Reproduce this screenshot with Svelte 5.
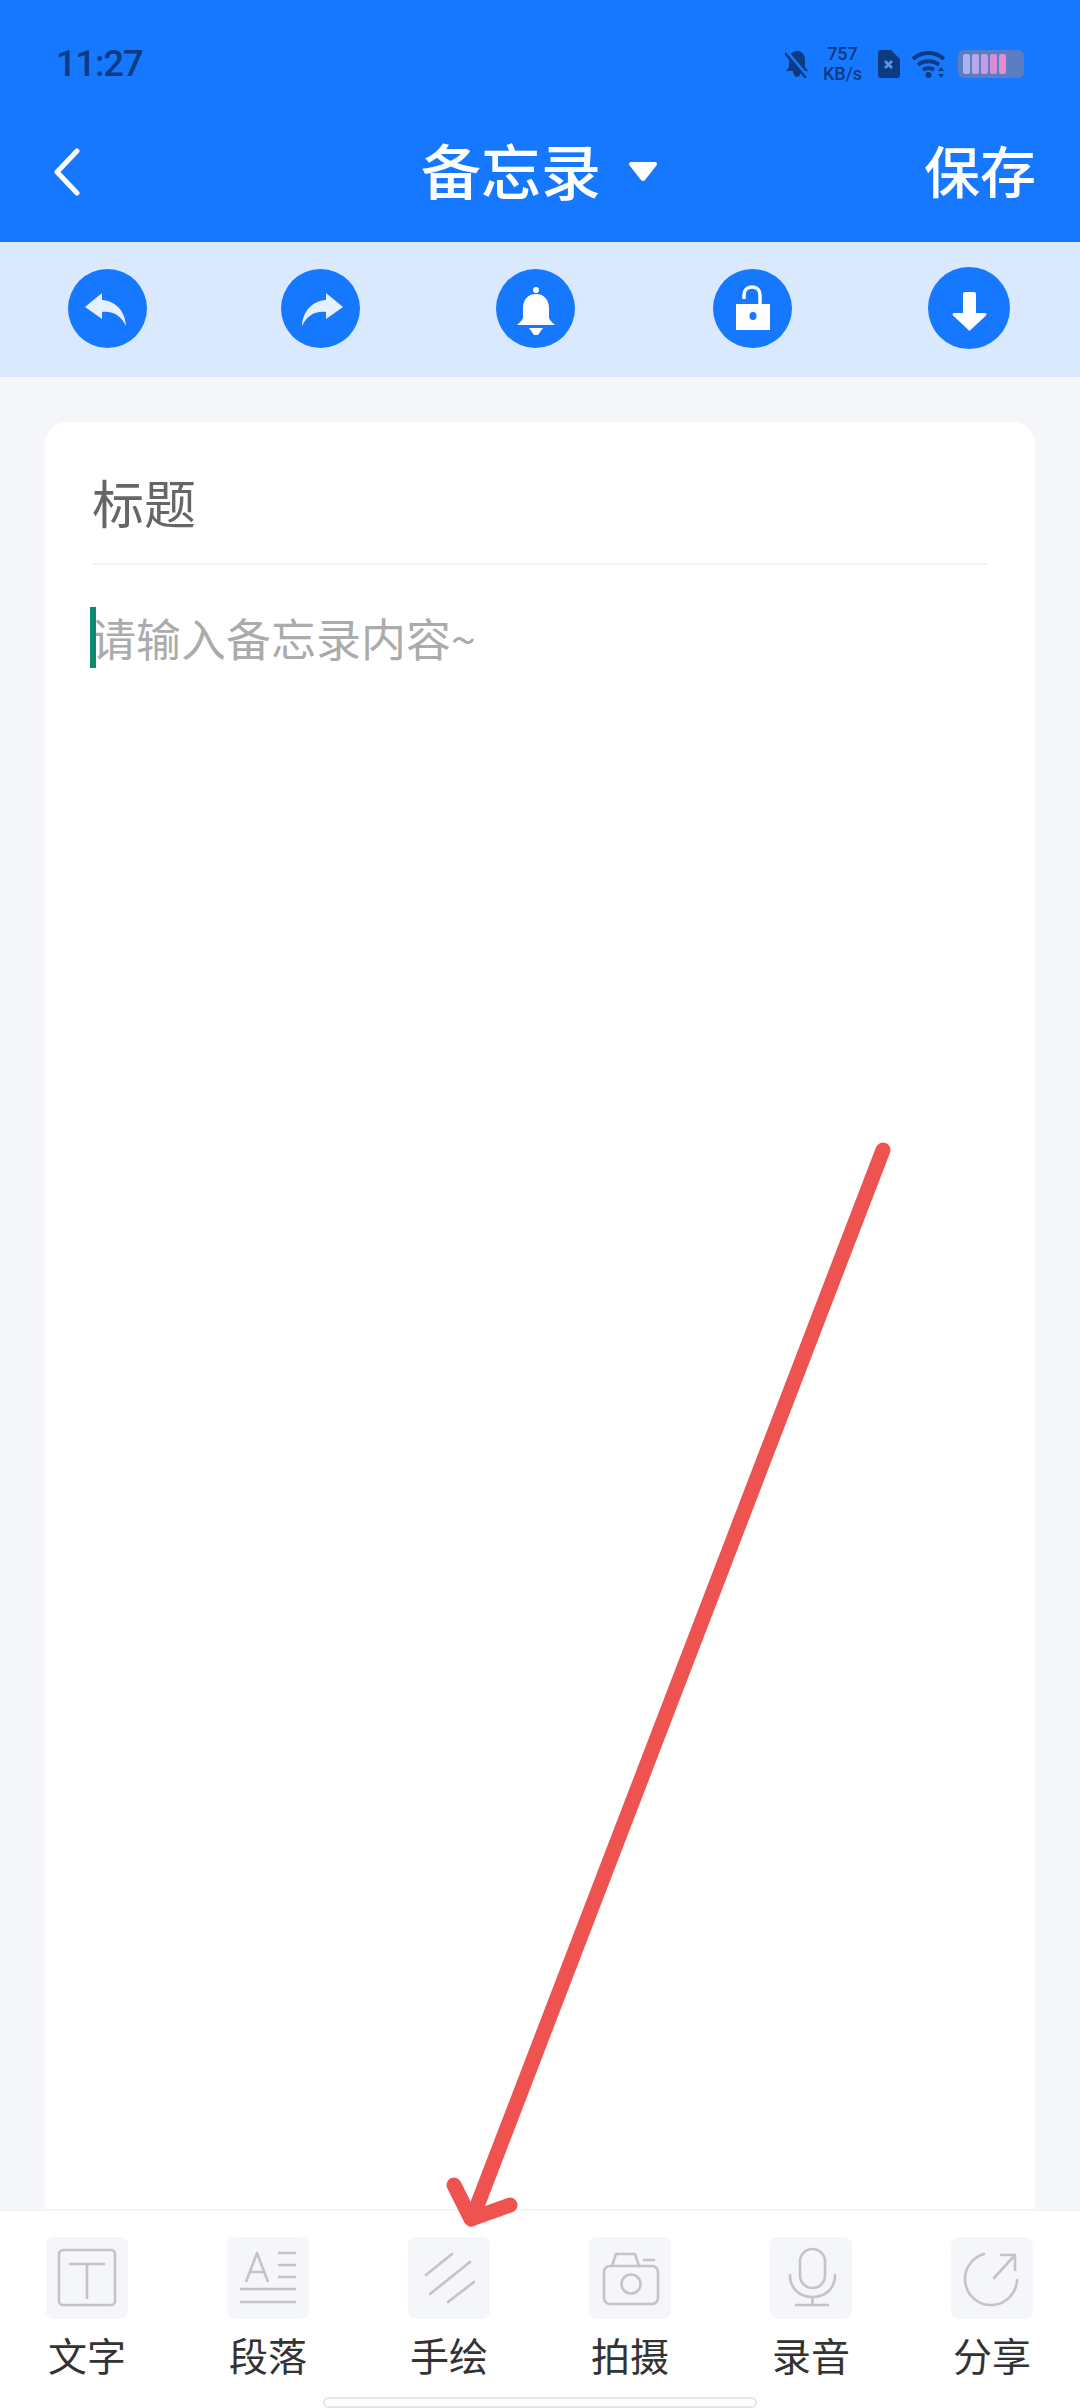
<script>
	const tools = [
		{ label: '文字', id: 'text' },
		{ label: '段落', id: 'para' },
		{ label: '手绘', id: 'draw' },
		{ label: '拍摄', id: 'camera' },
		{ label: '录音', id: 'mic' },
		{ label: '分享', id: 'share' }
	];
</script>

<div class="page">
	<header class="top">
		<div class="status">
			<span class="time">11:27</span>
			<div class="status-icons">
				<svg class="bell-off" width="24" height="28" viewBox="0 0 24 28">
					<path d="M12 1c-5 0-8 4-8 9v7l-3 4h7c0 3 2 6 4 6s4-3 4-6h7l-3-4v-7c0-5-3-9-8-9z" fill="#0c3b82" />
					<path d="M1 1l22 26" stroke="#1677ff" stroke-width="3.500" />
					<path d="M0 3l21 25" stroke="#0c3b82" stroke-width="2.500" />
				</svg>
				<div class="speed"><span>757</span><span>KB/s</span></div>
				<svg class="sim" width="23" height="28" viewBox="0 0 23 28">
					<path d="M4 0h10l9 9v16a3 3 0 0 1-3 3H4a3 3 0 0 1-3-3V3a3 3 0 0 1 3-3z" fill="#0c3b82" />
					<path d="M8 11l7 7M15 11l-7 7" stroke="#5d95ea" stroke-width="2.600" />
				</svg>
				<svg class="wifi" width="35" height="28" viewBox="0 0 35 28">
					<g fill="none" stroke="#0c3b82" stroke-width="3.800">
						<path d="M2 9c9-8 22-8 31 0" />
						<path d="M7 15c6-5 15-5 21 0" />
						<path d="M12 20c3-2.500 8-2.500 11 0" />
					</g>
					<circle cx="17.500" cy="25" r="3" fill="#0c3b82" />
					<path d="M30 17l3 4h-6zM30 28l3-4h-6z" fill="#0c3b82" />
				</svg>
				<div class="battery">
					<i style="background:#a9b4ee"></i>
					<i style="background:#b8a8ea"></i>
					<i style="background:#c59be2"></i>
					<i style="background:#d48fd8"></i>
					<i style="background:#e58ccb"></i>
				</div>
			</div>
		</div>
		<nav class="nav">
			<svg class="back" width="30" height="48" viewBox="0 0 30 48">
				<path d="M25 3L5 24l20 21" fill="none" stroke="#fff" stroke-width="5" stroke-linecap="round" stroke-linejoin="round" />
			</svg>
			<div class="title">
				<span>备忘录</span>
				<svg width="30" height="22" viewBox="0 0 30 22">
					<path d="M3 2h24a2 2 0 0 1 1.600 3.200L17 20a2.500 2.500 0 0 1-4 0L1.400 5.200A2 2 0 0 1 3 2z" fill="#fff" />
				</svg>
			</div>
			<span class="save">保存</span>
		</nav>
	</header>

	<div class="toolbar">
		<button class="round" aria-label="撤销">
			<svg viewBox="0 0 79 79">
				<path d="M17 38L34 24v7c14 1 23 11 24 26-5-10-12-15-24-14v7z" fill="#e6f0ff" />
			</svg>
		</button>
		<button class="round" aria-label="重做">
			<svg viewBox="0 0 79 79">
				<path d="M62 38L45 24v7c-14 1-23 11-24 26 5-10 12-15 24-14v7z" fill="#e6f0ff" />
			</svg>
		</button>
		<button class="round" aria-label="提醒">
			<svg viewBox="0 0 79 79">
				<circle cx="40" cy="21" r="3" fill="#fff" />
				<path d="M40 25c-8 0-13 6-13 14v9c0 3-3 5-6 8h38c-3-3-6-5-6-8v-9c0-8-5-14-13-14z" fill="#fff" />
				<path d="M33 59h14l-5 7h-4z" fill="#fff" />
			</svg>
		</button>
		<button class="round" aria-label="锁定">
			<svg viewBox="0 0 79 79">
				<path d="M31 30v-4c0-5 3-8 8-8s8 3 8 8v10" fill="none" stroke="#fff" stroke-width="3.500" />
				<path d="M23 35h34v26H23z" fill="#fff" />
				<ellipse cx="40" cy="47" rx="3.500" ry="4" fill="#1677ff" />
			</svg>
		</button>
		<button class="round big" aria-label="下载">
			<svg viewBox="0 0 82 82">
				<path d="M35 27a2 2 0 0 1 2-2h9a2 2 0 0 1 2 2v19h9a1.500 1.500 0 0 1 1.200 2.300L41.500 64 24.800 48.300A1.500 1.500 0 0 1 26 46h9z" fill="#fff" />
			</svg>
		</button>
	</div>

	<main class="content">
		<section class="card">
			<h1 class="note-title">标题</h1>
			<div class="body-line">
				<span class="cursor"></span>
				<span class="placeholder">请输入备忘录内容~</span>
			</div>
		</section>
	</main>

	<footer class="bottom">
		<div class="tools">
			{#each tools as t}
				<div class="tool">
					<div class="tool-box">
						<svg viewBox="0 0 82 82" fill="none" stroke="#c3c3c8" stroke-width="2.600" stroke-linecap="round" stroke-linejoin="round">
							{#if t.id === 'text'}
								<rect x="13" y="13" width="56" height="55" rx="4" />
								<path d="M24 27h34M41 27v34" />
							{:else if t.id === 'para'}
								<path d="M19 45L30 16l11 29M23 35h15" stroke-linecap="butt" />
								<path d="M51 16h18M51 28h18M51 40h18M13 52h56M13 65h56" stroke-linecap="butt" />
							{:else if t.id === 'draw'}
								<path d="M18 38L44 17M22 57L62 25M40 65l26-20" />
							{:else if t.id === 'camera'}
								<rect x="15" y="29" width="54" height="38" rx="6" />
								<path d="M23 29l4-12h19l4 12M55 23h10" />
								<circle cx="42" cy="47" r="9.500" />
							{:else if t.id === 'mic'}
								<rect x="30" y="12" width="25" height="39" rx="12.500" />
								<path d="M20 38c0 14 10 22 22.500 22S65 52 65 38M42.500 60v8M26 68h32" />
							{:else}
								<path d="M33 17A26 26 0 1 0 66 43" />
								<path d="M43 41l21-23M50 18h14v15" />
							{/if}
						</svg>
					</div>
					<span class="tool-label">{t.label}</span>
				</div>
			{/each}
		</div>
		<div class="home"></div>
	</footer>

	<!-- annotation drawn over the screenshot -->
	<svg class="arrow" width="1080" height="2408" viewBox="0 0 1080 2408">
		<g fill="none" stroke="#ef5350" stroke-width="15" stroke-linecap="round" stroke-linejoin="round">
			<path d="M883 1150L472 2219" />
			<path d="M454 2185L471 2219L510 2205" />
		</g>
	</svg>
</div>

<style>
	:global(body) {
		margin: 0;
		background: #f5f6fa;
	}
	.page {
		position: relative;
		width: 1080px;
		height: 2408px;
		display: flex;
		flex-direction: column;
		overflow: hidden;
		font-family: 'Noto Sans CJK SC', 'Noto Sans', sans-serif;
	}
	.top {
		height: 242px;
		background: #1677ff;
		box-sizing: border-box;
	}
	.status {
		height: 100px;
		box-sizing: border-box;
		padding: 28px 56px 0 56px;
		display: flex;
		align-items: center;
		justify-content: space-between;
	}
	.time {
		font-family: Roboto, sans-serif;
		font-size: 36px;
		font-weight: 500;
		letter-spacing: -1px;
		color: #0c3b82;
	}
	.status-icons {
		display: flex;
		align-items: center;
	}
	.speed {
		display: flex;
		flex-direction: column;
		align-items: center;
		margin: 0 15px 0 14px;
		font-family: Roboto, sans-serif;
		font-size: 18px;
		line-height: 20px;
		font-weight: 500;
		color: #0c3b82;
	}
	.wifi {
		margin: 0 12px 0 11px;
	}
	.battery {
		width: 66px;
		height: 28px;
		box-sizing: border-box;
		padding: 4px 0 4px 5px;
		border-radius: 6px;
		background: #5b7dc4;
		display: flex;
		gap: 2px;
	}
	.battery i {
		width: 7px;
		border-radius: 2px;
	}
	.nav {
		height: 142px;
		box-sizing: border-box;
		padding: 2px 44px 0 52px;
		display: flex;
		align-items: center;
		justify-content: space-between;
		position: relative;
		color: #fff;
	}
	.title {
		position: absolute;
		left: 421px;
		top: 27px;
		display: flex;
		align-items: center;
		gap: 27px;
		font-size: 60px;
		line-height: 84px;
		font-weight: 500;
	}
	.title svg {
		margin-top: 4px;
	}
	.save {
		margin-bottom: 6px;
		font-size: 56px;
		line-height: 84px;
		font-weight: 500;
	}
	.toolbar {
		height: 135px;
		background: #dbe9fe;
		display: flex;
		align-items: center;
		justify-content: space-between;
		padding: 0 68px 0 68px;
		box-sizing: border-box;
	}
	.round {
		width: 79px;
		height: 79px;
		padding: 0;
		border: none;
		border-radius: 50%;
		background: #1677ff;
		margin-top: -3px;
	}
	.round:nth-child(2),
	.round:nth-child(3) {
		position: relative;
		left: -3px;
	}
	.round:nth-child(4),
	.round:nth-child(5) {
		position: relative;
		left: -2px;
	}
	.round.big {
		width: 82px;
		height: 82px;
	}
	.round svg {
		display: block;
		width: 100%;
		height: 100%;
	}
	.content {
		flex: 1;
		display: flex;
		padding: 45px 45px 0;
		min-height: 0;
	}
	.card {
		flex: 1;
		background: #fff;
		border-radius: 22px 22px 0 0;
		padding: 44px 47px 0;
		box-sizing: border-box;
	}
	.note-title {
		margin: 0;
		height: 99px;
		box-sizing: border-box;
		border-bottom: 2px solid #f3f3f5;
		font-size: 52px;
		line-height: 72px;
		font-weight: 400;
		color: #666;
	}
	.body-line {
		position: relative;
		margin-top: 42px;
		height: 62px;
		display: flex;
		align-items: center;
	}
	.cursor {
		position: absolute;
		left: -2px;
		top: 0;
		width: 6px;
		height: 61px;
		background: #0c8a70;
	}
	.placeholder {
		margin-left: -1px;
		font-size: 45px;
		line-height: 62px;
		color: #ababab;
	}
	.bottom {
		height: 199px;
		box-sizing: border-box;
		background: #fff;
		border-top: 2px solid #f3f4f6;
		display: flex;
		flex-direction: column;
		align-items: center;
		position: relative;
	}
	.tools {
		width: 100%;
		box-sizing: border-box;
		padding: 26px 47px 0 46px;
		display: flex;
		justify-content: space-between;
	}
	.tool {
		width: 82px;
		display: flex;
		flex-direction: column;
		align-items: center;
	}
	.tool-box {
		width: 82px;
		height: 82px;
		border-radius: 8px;
		background: #f5f6fa;
	}
	.tool-box svg {
		display: block;
		width: 100%;
		height: 100%;
	}
	.tool-label {
		margin-top: 7px;
		font-size: 39px;
		line-height: 56px;
		color: #333;
		white-space: nowrap;
	}
	.home {
		position: absolute;
		left: 323px;
		top: 186px;
		width: 434px;
		height: 11px;
		box-sizing: border-box;
		background: #fff;
		border: 2px solid #e6e6e6;
		border-radius: 6px;
	}
	.arrow {
		position: absolute;
		left: 0;
		top: 0;
		pointer-events: none;
	}
</style>
